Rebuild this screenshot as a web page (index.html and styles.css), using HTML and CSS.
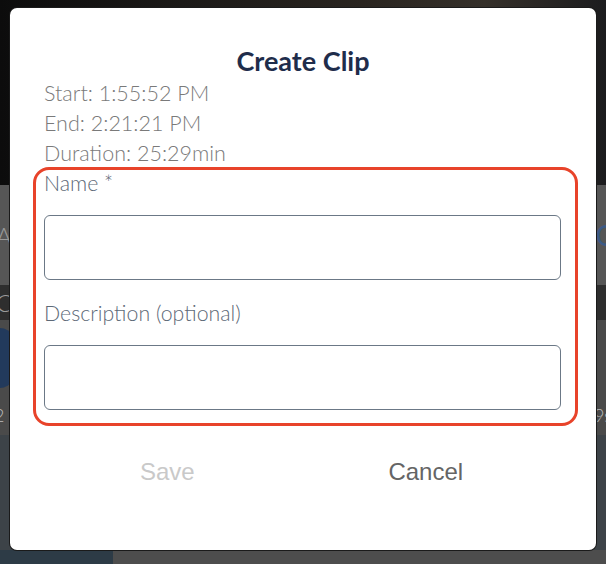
FILE: index.html
```html
<!DOCTYPE html>
<html>
<head>
<meta charset="utf-8">
<link rel="stylesheet" href="styles.css">
</head>
<body>
<div class="backdrop">
  <div class="bg-top"></div>
  <div class="bg-mid">
    <div class="bg-row bg-row-a"><span class="bg-letter">A</span><span class="bg-q">Q</span></div>
    <div class="bg-row bg-row-c"><span class="bg-letter">C</span></div>
    <div class="bg-row bg-row-d"><span class="bg-circle"></span></div>
    <div class="bg-row bg-row-e"><span class="bg-letter small">2</span><span class="bg-letter small">9s</span></div>
  </div>
  <div class="bg-low"></div>
  <div class="bg-bottom"><div class="bb-left"></div><div class="bb-right"></div></div>
</div>

<div class="modal">
  <h1 class="modal-title">Create Clip</h1>
  <div class="clip-info">
    <div>Start: 1:55:52 PM</div>
    <div>End: 2:21:21 PM</div>
    <div>Duration: 25:29min</div>
  </div>
  <div class="highlight">
    <label class="field-label" for="name">Name *</label>
    <input class="field-input" id="name" type="text">
    <label class="field-label second" for="desc">Description (optional)</label>
    <input class="field-input" id="desc" type="text">
  </div>
  <div class="actions">
    <button class="action save" disabled>Save</button>
    <button class="action cancel">Cancel</button>
  </div>
</div>
</body>
</html>
```
FILE: styles.css
```css
* { box-sizing: border-box; }
html, body {
  margin: 0;
  padding: 0;
  width: 606px;
  height: 564px;
  overflow: hidden;
  background: #3d4348;
}

.backdrop {
  display: flex;
  flex-direction: column;
  width: 606px;
  height: 564px;
}
.bg-top {
  height: 185px;
  background: linear-gradient(90deg, #0c0c0c 0%, #1c1a18 30%, #2a2520 60%, #35302a 80%, #1c1c1e 100%);
}
.bg-mid {
  height: 250px;
  display: flex;
  flex-direction: column;
  background: #4f4f4f;
}
.bg-row {
  display: flex;
  justify-content: space-between;
  align-items: center;
}
.bg-row-a { height: 100px; background: #565656; }
.bg-row-c { height: 35px; background: #2e2e2e; }
.bg-row-d { height: 75px; background: #4a4a4a; }
.bg-row-e { height: 40px; background: #4a4a4a; }
.bg-letter {
  font-family: "Lato", sans-serif;
  font-weight: 300;
  font-size: 24px;
  color: #9a9a9a;
  margin-left: -4px;
}
.bg-letter.small { font-size: 18px; color: #bbb; margin: 0 -6px; }
.bg-q {
  font-family: "Lato", sans-serif;
  font-size: 28px;
  color: #3b5a86;
  margin-right: -12px;
}
.bg-circle {
  width: 40px;
  height: 60px;
  margin-left: -20px;
  border-radius: 50%;
  background: #223a5c;
}
.bg-low { flex: 1; background: #3d4348; }
.bg-bottom { height: 14px; display: flex; }
.bb-left { width: 113px; background: #2d3b46; }
.bb-right { flex: 1; background: #4d4d4d; }

.modal {
  position: absolute;
  left: 10px;
  top: 8px;
  width: 586px;
  height: 542px;
  background: #fff;
  border-radius: 7px;
  box-shadow: 0 0 0 1px #1a1a1a;
  display: flex;
  flex-direction: column;
}
.modal-title {
  margin: 38px 0 0;
  font-family: "Lato", sans-serif;
  font-weight: 700;
  font-size: 27px;
  line-height: 30px;
  color: #1f2d4b;
  text-align: center;
}
.clip-info {
  margin: 2px 0 0 34px;
  font-family: "Lato", sans-serif;
  font-weight: 300;
  font-size: 21.5px;
  line-height: 30px;
  color: #7a7a7a;
}
.highlight {
  margin: -1px 18px 0 23px;
  border: 3px solid #e8432a;
  border-radius: 16px;
  padding: 1px 14px 13px 8px;
  display: flex;
  flex-direction: column;
}
.field-label {
  font-family: "Lato", sans-serif;
  font-weight: 300;
  font-size: 21.3px;
  line-height: 24px;
  color: #5d6977;
  margin: 0 0 20px 0;
}
.field-label.second { margin-top: 21px; margin-bottom: 20px; }
.field-input {
  height: 65px;
  width: 517px;
  border: 1.5px solid #6b7886;
  border-radius: 6px;
  background: #fff;
  outline: none;
  font-size: 18px;
}
.actions {
  display: flex;
  margin: 23px 0 0 28px;
  width: 517px;
}
.action {
  flex: 1;
  height: 46px;
  border: none;
  background: none;
  font-family: "Liberation Sans", Arial, sans-serif;
  font-size: 24px;
  padding: 0;
}
.save { color: #c9c9c9; }
.cancel { color: #656565; }
```
